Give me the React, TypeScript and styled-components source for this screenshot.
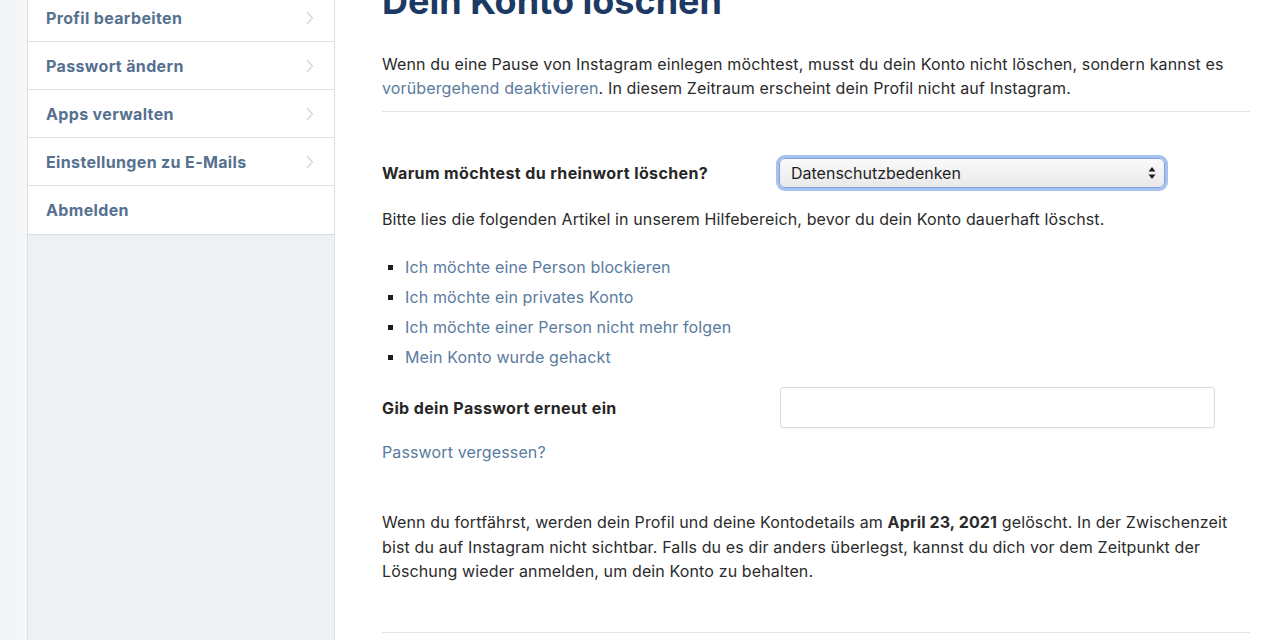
import React from "react";
import styled, { createGlobalStyle } from "styled-components";

const Global = createGlobalStyle`
  html, body { margin: 0; padding: 0; background: #fff; }
  body {
    font-family: "Inter", "Liberation Sans", sans-serif;
    color: #262626;
    -webkit-font-smoothing: antialiased;
    overflow: hidden;
  }
  * { box-sizing: border-box; }
`;

const Page = styled.div`
  display: flex;
  width: 1280px;
  height: 640px;
  overflow: hidden;
  background: linear-gradient(to right, #f1f3f5 0, #f6f7f9 27px, #fff 27px);
`;

const Gutter = styled.div`
  width: 27px;
  flex: none;
`;

const Sidebar = styled.nav`
  width: 308px;
  flex: none;
  display: flex;
  flex-direction: column;
  background: #eef1f4;
  border-left: 1px solid #dcdfe2;
  border-right: 1px solid #dcdfe2;
  margin-top: -6px;
`;

const Menu = styled.ul`
  list-style: none;
  margin: 0;
  padding: 0;
  background: #fff;
  border-bottom: 1px solid #d8dbde;
`;

const MenuItem = styled.li<{ $last?: boolean }>`
  height: 48px;
  display: flex;
  align-items: center;
  justify-content: space-between;
  padding: 0 20px 0 18px;
  border-bottom: ${(p) => (p.$last ? "none" : "1px solid #dcdfe2")};
  font-size: 16px;
  font-weight: 700;
  color: #56718f;
  letter-spacing: 0.35px;
`;

const Chevron = styled.svg`
  width: 8px;
  height: 14px;
  flex: none;
`;

const Main = styled.main`
  flex: 1;
  background: #fff;
  padding: 0 30px 0 47px;
  display: flex;
  flex-direction: column;
`;

const Title = styled.h1`
  margin: -21px 0 0;
  font-size: 36px;
  line-height: 44px;
  font-weight: 700;
  color: #1c3a63;
  letter-spacing: 0;
`;

const Intro = styled.p`
  margin: 29px 0 0;
  font-size: 16px;
  line-height: 24px;
  letter-spacing: 0.13px;
  color: #2b2b2b;
  padding-bottom: 11px;
  border-bottom: 1px solid #e2e4e6;
`;

const Link = styled.a`
  color: #5a7ba0;
  text-decoration: none;
`;

const FieldRow = styled.div<{ $top: number }>`
  display: grid;
  grid-template-columns: 397px 1fr;
  align-items: center;
  margin-top: ${(p) => p.$top}px;
`;

const Label = styled.label`
  font-size: 16px;
  font-weight: 700;
  letter-spacing: 0.38px;
  color: #262626;
`;

const SelectBox = styled.div`
  width: 386px;
  height: 30px;
  display: flex;
  align-items: center;
  justify-content: space-between;
  padding: 0 8px 0 11px;
  border-radius: 6px;
  border: 1px solid #7fa2dc;
  box-shadow: 0 0 0 3px #a6c1ee;
  background: linear-gradient(#fafafa, #e9e9e9);
  font-size: 16px;
  color: #1f1f1f;
`;

const Body = styled.p<{ $top: number }>`
  margin: ${(p) => p.$top}px 0 0;
  font-size: 16px;
  line-height: 24px;
  letter-spacing: 0.13px;
  color: #2b2b2b;
`;

const Bullets = styled.ul`
  margin: 24px 0 0;
  padding: 0;
  list-style: none;
  display: flex;
  flex-direction: column;
  gap: 6px;
`;

const Bullet = styled.li`
  display: flex;
  align-items: center;
  gap: 12px;
  padding-left: 6px;
  font-size: 16px;
  line-height: 24px;
  letter-spacing: 0.13px;
  &::before {
    content: "";
    width: 5px;
    height: 5px;
    background: #1d1d1d;
    flex: none;
  }
`;

const Input = styled.input`
  width: 435px;
  height: 41px;
  border: 1px solid #d9dbde;
  border-radius: 3px;
  background: #fff;
  margin-left: 1px;
  box-shadow: 0 1px 1px rgba(0, 0, 0, 0.04);
`;

const Final = styled.p`
  margin: 46px 0 0;
  font-size: 16px;
  line-height: 24.5px;
  letter-spacing: 0.13px;
  color: #2b2b2b;
  padding-bottom: 48px;
  border-bottom: 1px solid #e2e4e6;
`;

const menu = [
  "Profil bearbeiten",
  "Passwort ändern",
  "Apps verwalten",
  "Einstellungen zu E-Mails",
  "Abmelden",
];

const articles = [
  "Ich möchte eine Person blockieren",
  "Ich möchte ein privates Konto",
  "Ich möchte einer Person nicht mehr folgen",
  "Mein Konto wurde gehackt",
];

export default function App() {
  return (
    <>
      <Global />
      <Page>
        <Gutter />
        <Sidebar>
          <Menu>
            {menu.map((m, i) => {
              const last = i === menu.length - 1;
              return (
                <MenuItem key={m} $last={last}>
                  {m}
                  {!last && (
                    <Chevron viewBox="0 0 8 14">
                      <path d="M1.5 1.5 L6.5 7 L1.5 12.5" fill="none" stroke="#d5d7da" strokeWidth="1.4" strokeLinecap="round" strokeLinejoin="round" />
                    </Chevron>
                  )}
                </MenuItem>
              );
            })}
          </Menu>
        </Sidebar>
        <Main>
          <Title>Dein Konto löschen</Title>
          <Intro>
            Wenn du eine Pause von Instagram einlegen möchtest, musst du dein Konto nicht löschen, sondern kannst es{" "}
            <Link href="#">vorübergehend deaktivieren</Link>. In diesem Zeitraum erscheint dein Profil nicht auf Instagram.
          </Intro>
          <FieldRow $top={46}>
            <Label>Warum möchtest du rheinwort löschen?</Label>
            <SelectBox>
              Datenschutzbedenken
              <svg width="8" height="14" viewBox="0 0 8 14">
                <path d="M4 1 L7.5 5.5 H0.5 Z" fill="#1f1f1f" />
                <path d="M4 13 L7.5 8.5 H0.5 Z" fill="#1f1f1f" />
              </svg>
            </SelectBox>
          </FieldRow>
          <Body $top={19}>
            Bitte lies die folgenden Artikel in unserem Hilfebereich, bevor du dein Konto dauerhaft löschst.
          </Body>
          <Bullets>
            {articles.map((a) => (
              <Bullet key={a}>
                <Link href="#">{a}</Link>
              </Bullet>
            ))}
          </Bullets>
          <FieldRow $top={18}>
            <Label>Gib dein Passwort erneut ein</Label>
            <Input type="password" />
          </FieldRow>
          <Body $top={12}>
            <Link href="#">Passwort vergessen?</Link>
          </Body>
          <Final>
            Wenn du fortfährst, werden dein Profil und deine Kontodetails am <strong>April 23, 2021</strong> gelöscht. In der Zwischenzeit bist du auf Instagram nicht sichtbar. Falls du es dir anders überlegst, kannst du dich vor dem Zeitpunkt der Löschung wieder anmelden, um dein Konto zu behalten.
          </Final>
        </Main>
      </Page>
    </>
  );
}
